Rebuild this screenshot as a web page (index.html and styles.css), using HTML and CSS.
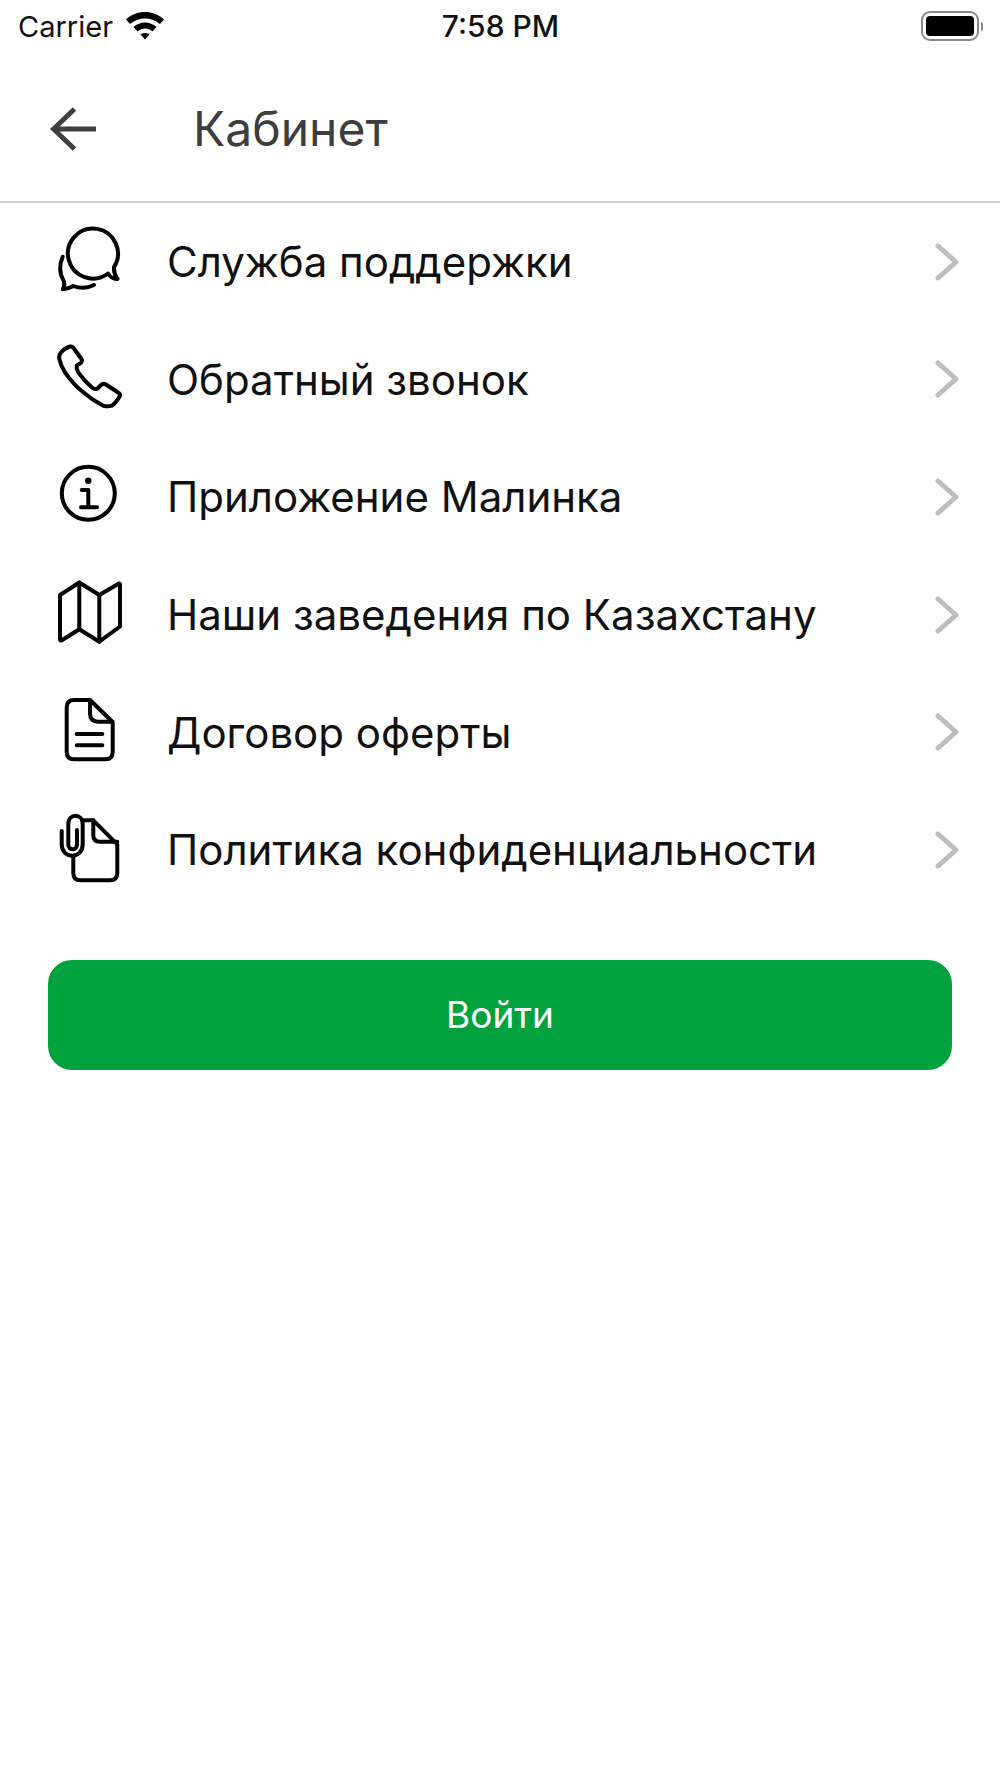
FILE: index.html
```html
<!DOCTYPE html>
<html lang="ru">
<head>
    <meta charset="UTF-8">
    <meta name="viewport" content="width=device-width, initial-scale=1.0">
    <title>Кабинет</title>
    <link rel="stylesheet" href="styles.css">
</head>
<body>

    <!-- Status bar -->
    <div class="status-bar">
        <div class="status-left">
            <span class="carrier">Carrier</span>
            <svg class="wifi" width="40" height="30" viewBox="0 0 40 30">
                <path d="M1 9.5C11 -0.5 29 -0.5 39 9.5L35 14C27 6.500 13 6.500 5 14Z"/>
                <path d="M8.500 17C15 11 25 11 31.500 17L27.500 21.500C23 17.500 17 17.500 12.500 21.500Z"/>
                <path d="M15.500 24.500C18 22.500 22 22.500 24.500 24.500L20 29.500Z"/>
            </svg>
        </div>
        <span class="clock">7:58 PM</span>
        <div class="battery">
            <div class="battery-body"><div class="battery-level"></div></div>
            <div class="battery-cap"></div>
        </div>
    </div>

    <!-- Header -->
    <header class="top-bar">
        <svg class="back" width="48" height="44" viewBox="0 0 48 44">
            <path d="M46 22H3M24.500 2L3.500 22L24.500 42"/>
        </svg>
        <h1 class="title">Кабинет</h1>
    </header>

    <!-- Menu -->
    <ul class="menu">
        <li class="menu-item">
            <svg class="menu-icon" width="68" height="68" viewBox="0 0 68 68">
                <path d="M52 45.500A25 25 0 1 1 58 39Q57.500 45.500 61.500 51Q56 51.500 52 45.500Z"/>
                <path d="M6.700 28.700Q1 42 8 53.700Q9 58 6.700 61.300Q12 61 17.300 58Q28 62 38 57"/>
            </svg>
            <span class="menu-label">Служба поддержки</span>
            <svg class="chevron" width="24" height="38" viewBox="0 0 24 38"><path d="M3 3L21 19L3 35"/></svg>
        </li>
        <li class="menu-item">
            <svg class="menu-icon" width="68" height="68" viewBox="0 0 68 68">
                <path d="M14 1.500Q9 3 5 7.500Q2.500 10.500 3.300 14Q5 21 9 27.300Q17 39 27.300 47.300Q36 55 47.300 60.700Q52 62 55.700 60.700Q60 58 64 50.700Q64.500 49 62 47.500L50 39.500Q47.300 38 45 40L41.500 43.500Q39 45 35.700 42.300Q28 35.500 22.300 27.300Q20 24 20.700 20.700L25 17.800Q26.500 16 25.500 14L17.500 3Q16 1 14 1.500Z"/>
            </svg>
            <span class="menu-label">Обратный звонок</span>
            <svg class="chevron" width="24" height="38" viewBox="0 0 24 38"><path d="M3 3L21 19L3 35"/></svg>
        </li>
        <li class="menu-item">
            <svg class="menu-icon" width="68" height="68" viewBox="0 0 68 68">
                <circle cx="32.300" cy="30.300" r="26.500"/>
                <circle class="solid" cx="32.300" cy="17.700" r="3.200"/>
                <path d="M25.700 27H32.300V44.300M25 44.300H41"/>
            </svg>
            <span class="menu-label">Приложение Малинка</span>
            <svg class="chevron" width="24" height="38" viewBox="0 0 24 38"><path d="M3 3L21 19L3 35"/></svg>
        </li>
        <li class="menu-item">
            <svg class="menu-icon" width="68" height="68" viewBox="0 0 68 68">
                <path d="M4 14L23.300 1.500L43.300 14L63 2.500Q64 2.500 64 4V45.500L43.300 60.700L23.300 48.300L5.500 59.500Q4 60 4 58Z"/>
                <path d="M23.300 1.500V48.300M43.300 14V60.700"/>
            </svg>
            <span class="menu-label">Наши заведения по Казахстану</span>
            <svg class="chevron" width="24" height="38" viewBox="0 0 24 38"><path d="M3 3L21 19L3 35"/></svg>
        </li>
        <li class="menu-item">
            <svg class="menu-icon" width="68" height="68" viewBox="0 0 68 68">
                <path d="M34 2H18Q10.700 2 10.700 9.500V54Q10.700 61.300 18 61.300H49.500Q56.700 61.300 56.700 54V24L34 2V15.300Q34 23.700 42 23.700H56.700"/>
                <path d="M20.700 36H46.300M20.700 47.300H46.300"/>
            </svg>
            <span class="menu-label">Договор оферты</span>
            <svg class="chevron" width="24" height="38" viewBox="0 0 24 38"><path d="M3 3L21 19L3 35"/></svg>
        </li>
        <li class="menu-item">
            <svg class="menu-icon" width="68" height="68" viewBox="0 0 68 68">
                <path d="M27.300 4.300H37.300L61.300 28.300V57Q61.300 64.300 54 64.300H24.500Q17.300 64.300 17.300 57V40"/>
                <path d="M37.300 4.300V19Q37.300 25.700 44 25.700H61.300"/>
                <path d="M5.700 15V28.300C5.700 43.500 26.700 43.500 26.700 28.300V8.300C26.700 -3 12.300 -3 12.300 8.300V28.300C12.300 35 21 35 21 28.300V14"/>
            </svg>
            <span class="menu-label">Политика конфиденциальности</span>
            <svg class="chevron" width="24" height="38" viewBox="0 0 24 38"><path d="M3 3L21 19L3 35"/></svg>
        </li>
    </ul>

    <button type="button" class="button">Войти</button>

</body>
</html>
```

FILE: styles.css
```css
body {
    font-family: Inter, "Liberation Sans", sans-serif;
    background-color: #fff;
    color: #111;
    margin: 0;
    padding: 0;
}

.status-bar {
    display: flex;
    align-items: center;
    justify-content: space-between;
    height: 56px;
    padding: 0 17px 4px 18px;
    box-sizing: border-box;
}
.status-left {
    display: flex;
    align-items: center;
    gap: 12px;
    width: 300px;
}
.carrier {
    font-size: 29px;
    color: #111;
}
.wifi {
    fill: #000;
    margin-top: -2px;
}
.clock {
    font-size: 30px;
    font-weight: 500;
    color: #111;
}
.battery {
    display: flex;
    align-items: center;
    justify-content: flex-end;
    width: 300px;
    gap: 2px;
}
.battery-body {
    width: 58px;
    height: 30px;
    box-sizing: border-box;
    border: 2px solid #8a8a8a;
    border-radius: 9px;
    padding: 3px;
}
.battery-level {
    height: 100%;
    background-color: #000;
    border-radius: 4px;
}
.battery-cap {
    width: 2px;
    height: 9px;
    background-color: #8a8a8a;
    border-radius: 0 2px 2px 0;
}

.top-bar {
    display: flex;
    align-items: center;
    height: 147px;
    box-sizing: border-box;
    padding: 0 0 0 50px;
    border-bottom: 2px solid #cfcfcf;
}
.back {
    fill: none;
    stroke: #3f3f3f;
    stroke-width: 5;
}
.title {
    margin: 0 0 0 95px;
    font-size: 48px;
    font-weight: 400;
    color: #3d3d3d;
}

.menu {
    list-style: none;
    margin: 0;
    padding: 0;
}
.menu-item {
    display: flex;
    align-items: center;
    height: 117.6px;
    padding: 0 41px 0 56px;
}
.menu-icon {
    flex: none;
    overflow: visible;
    fill: none;
    stroke: #000;
    stroke-width: 4;
    stroke-linecap: round;
    stroke-linejoin: round;
}
.menu-icon .solid {
    fill: #000;
    stroke: none;
}
.menu-label {
    flex: 1;
    margin-left: 43px;
    font-size: 42px;
    color: #111;
}
.chevron {
    flex: none;
    fill: none;
    stroke: #bdbdbd;
    stroke-width: 5;
    stroke-linecap: round;
    stroke-linejoin: round;
}

.button {
    display: block;
    width: 904px;
    height: 110px;
    margin: 51px 0 0 48px;
    background-color: #00a23e;
    color: #fff;
    border: none;
    border-radius: 24px;
    font-family: inherit;
    font-size: 37px;
}
```
